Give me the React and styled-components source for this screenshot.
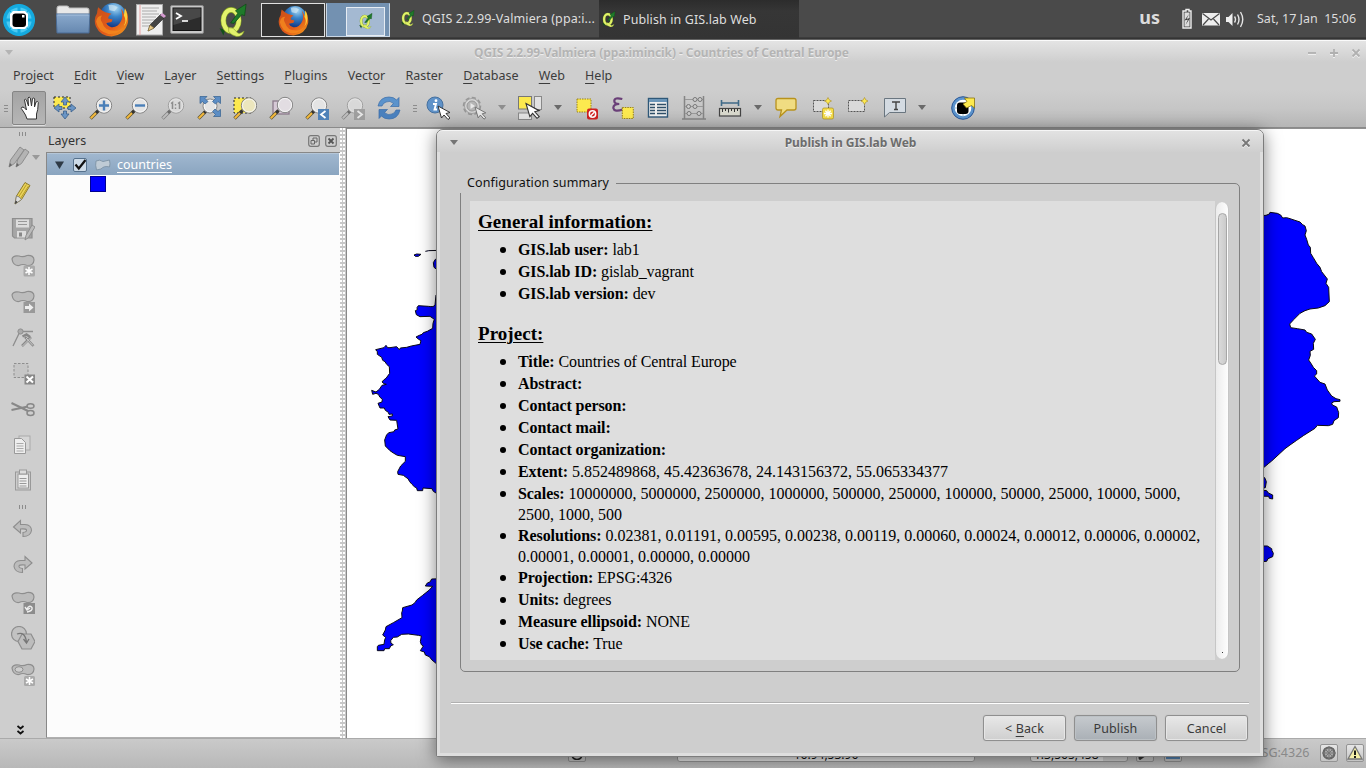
import React from "react";
import styled, { createGlobalStyle } from "styled-components";

const Global = createGlobalStyle`
  * { box-sizing: border-box; }
  html, body { margin: 0; padding: 0; overflow: hidden; }
  body { font-family: "Noto Sans", "Open Sans", sans-serif; font-size: 12.5px; color: #3c3c3c; }
  svg { display: block; flex: none; }
`;

const Desktop = styled.div`
  position: relative;
  width: 1366px;
  height: 768px;
  overflow: hidden;
  display: flex;
  flex-direction: column;
  background: #cecece;
`;

/* ---------- top panel ---------- */
const Panel = styled.header`
  height: 40px;
  flex: none;
  display: flex;
  align-items: flex-start;
  background: linear-gradient(#4a4a4a 0, #4a4a4a 37px, #2e2e2e 38px, #3a3a3a 39px, #8a8a8a 40px);
  color: #dcdcdc;
`;
const Launcher = styled.div`
  width: ${(p) => p.$w}px;
  height: 39px;
  display: flex;
  align-items: center;
  padding-left: ${(p) => p.$l || 0}px;
`;
const Workspace = styled.div`
  width: 64px;
  height: 34px;
  margin: 3px 1px 0 0;
  border: 1px solid ${(p) => (p.$active ? "#c9d6e4" : "#e0e0e0")};
  border-top-color: ${(p) => (p.$active ? "#7391b1" : "#e0e0e0")};
  background: ${(p) => (p.$active ? "#7391b1" : "#333")};
  display: flex;
  align-items: center;
  justify-content: ${(p) => (p.$active ? "flex-end" : "center")};
  padding-right: ${(p) => (p.$active ? 4 : 0)}px;
`;
const MiniWindow = styled.div`
  width: 39px;
  height: 29px;
  margin-top: 2px;
  border: 1px solid #e6ecf3;
  background: #a4b9d2;
  display: flex;
  align-items: center;
  justify-content: center;
`;
const Task = styled.div`
  width: ${(p) => p.$w}px;
  height: 38px;
  padding: 0 0 ${(p) => (p.$active ? 0 : 2)}px ${(p) => p.$l}px;
  display: flex;
  align-items: center;
  gap: 7px;
  white-space: nowrap;
  color: #dedede;
  background: ${(p) => (p.$active ? "linear-gradient(#2c2c2c, #363636 30%, #343434)" : "transparent")};
  font-size: 12.5px;
  letter-spacing: 0.1px;
`;
const Tray = styled.div`
  margin-left: auto;
  height: 37px;
  display: flex;
  align-items: center;
  padding-right: 9px;
`;
const Keyboard = styled.span`
  font-weight: bold;
  font-size: 18px;
  margin-right: 20px;
  padding-bottom: 3px;
`;
const Clock = styled.span`
  font-size: 12.5px;
  margin-left: 13px;
  padding-bottom: 1px;
  white-space: pre;
  width: 100px;
`;

/* ---------- application window ---------- */
const TitleBar = styled.div`
  height: 22px;
  flex: none;
  border-top: 1px solid #fbfbfb;
  background: linear-gradient(#e4e4e4, #cecece);
  display: flex;
  align-items: center;
  justify-content: space-between;
  padding: 2px 5px 0;
`;
const AppTitle = styled.span`
  font-weight: bold;
  font-size: 12px;
  color: #b4b4b4;
  text-shadow: 0 1px 0 #eee;
  white-space: nowrap;
  margin-left: 3px;
  letter-spacing: -0.08px;
`;
const MenuBar = styled.nav`
  height: 28px;
  flex: none;
  display: flex;
  align-items: center;
  gap: 20.2px;
  padding: 0 0 2px 13px;
  font-size: 12.5px;
`;
const MenuItem = styled.span`
  u { text-underline-offset: 3px; text-decoration-thickness: 1px; }
`;
const ToolBar = styled.div`
  height: 38px;
  flex: none;
  display: flex;
  align-items: center;
  padding-bottom: 2px;
  background: linear-gradient(#cecece, #c6c6c6 50%, #b6b6b6);
  border-bottom: 1px solid #8a8a8a;
`;
const Slot = styled.div`
  width: ${(p) => p.$w || 36}px;
  height: 35px;
  margin-left: ${(p) => p.$ml || 0}px;
  display: flex;
  align-items: center;
  justify-content: center;
  opacity: ${(p) => (p.$off ? 0.6 : 1)};
  filter: ${(p) => (p.$off ? "grayscale(1)" : "none")};
`;
const PressedSlot = styled(Slot)`
  height: 34px;
  border: 1px solid #868686;
  border-radius: 2px;
  background: linear-gradient(#a4a4a4, #b6b6b6);
  box-shadow: 0 1px 0 #e0e0e0;
`;
const HGrip = styled.div`
  width: 4px;
  height: 8px;
  margin: 2px ${(p) => p.$r}px 0 ${(p) => p.$l}px;
  background: repeating-linear-gradient(#8c8c8c 0 1px, transparent 1px 3px);
`;
const VGrip = styled.div`
  width: 7px;
  height: 4px;
  flex: none;
  margin: ${(p) => p.$t}px 0 ${(p) => p.$b}px 19px;
  background: repeating-linear-gradient(90deg, #8c8c8c 0 1px, transparent 1px 3px);
`;
const Triangle = styled.i`
  border: 4px solid transparent;
  border-top: 5px solid ${(p) => p.$c || "#6a6a6a"};
  border-bottom: 0;
`;

const Workbench = styled.div`
  height: 610px;
  flex: none;
  display: flex;
`;
const SideBar = styled.aside`
  width: 46px;
  display: flex;
  flex-direction: column;
  background: #cecece;
`;
const SideSlot = styled.div`
  width: 46px;
  height: 36px;
  flex: none;
  display: flex;
  align-items: center;
  justify-content: center;
  padding-left: ${(p) => p.$l || 0}px;
`;
const MoreTools = styled.div`
  margin: 33px 0 0 17px;
`;
const Dock = styled.section`
  width: 294px;
  display: flex;
  flex-direction: column;
`;
const DockTitle = styled.div`
  height: 24px;
  flex: none;
  display: flex;
  align-items: center;
  gap: 5px;
  padding: 1px 3px 0 2px;
  color: #333;
`;
const DockName = styled.span`
  flex: 1;
`;
const Tree = styled.div`
  flex: 1;
  border-left: 1px solid #888;
  border-top: 1px solid #888;
  border-bottom: 1px solid #b0b0b0;
  background: #fcfcfc;
`;
const TreeRow = styled.div`
  height: 22px;
  width: 292px;
  border-top: 1px solid #b4c6d8;
  background: linear-gradient(#a0b7cf, #8aa5c0);
  color: #fff;
  display: flex;
  align-items: center;
  padding-left: 8px;
`;
const CheckBox = styled.div`
  width: 14px;
  height: 14px;
  margin: 0 8px 0 9px;
  border: 1px solid #56718c;
  border-radius: 2px;
  background: #cddbe8;
`;
const LayerName = styled.span`
  margin-left: 6px;
  text-decoration: underline;
  text-underline-offset: 3px;
`;
const Symbol = styled.div`
  width: 16px;
  height: 16px;
  margin: 1px 0 0 43px;
  background: #00f;
  border: 1px solid #000090;
`;
const Splitter = styled.div`
  width: 7px;
  border-right: 1px solid #888;
  background: radial-gradient(circle at 1px 1px, #fff 0.8px, transparent 1px) 0 0 / 3px 4px, #c8c8c8;
`;
const Canvas = styled.div`
  width: 1019px;
  background: #fff;
  box-shadow: inset 0 1px 0 #909090;
`;
const StatusBar = styled.footer`
  flex: 1;
  display: flex;
  align-items: flex-start;
  padding-top: 4px;
  border-top: 1px solid #aaa;
  background: linear-gradient(#cacaca, #b8b8b8);
  font-size: 12px;
  white-space: nowrap;
`;
const Field = styled.div`
  width: ${(p) => p.$w}px;
  height: 19px;
  margin-left: ${(p) => p.$ml}px;
  padding-top: 2px;
  padding-left: ${(p) => p.$pl || 0}px;
  line-height: 17px;
  border: 1px solid #999;
  border-radius: 3px;
  text-align: ${(p) => (p.$pl ? "left" : "center")};
  background: ${(p) => (p.$pl ? "linear-gradient(90deg,#eee 72px,#d6d6d6 72px)" : "#ececec")};
  color: #111;
`;
const StatusButton = styled.div`
  width: 18px;
  height: 18px;
  margin-top: 1px;
  margin-left: ${(p) => p.$ml}px;
  border: 1px solid #949494;
  border-radius: 2px;
  background: linear-gradient(#e6e6e6, #c4c4c4);
  display: flex;
  align-items: center;
  justify-content: center;
`;
const Crs = styled.span`
  width: 60px;
  margin-left: 65px;
  padding-top: 1px;
  text-align: right;
  color: #8a8a8a;
  font-size: 12.5px;
`;

/* ---------- dialog ---------- */
const Dialog = styled.section`
  position: absolute;
  left: 436px;
  top: 129px;
  width: 828px;
  height: 628px;
  border: 1px solid #7c7c7c;
  border-radius: 7px 7px 2px 2px;
  background: #cecece;
  box-shadow: 0 3px 17px rgba(0, 0, 0, 0.5);
  display: flex;
  flex-direction: column;
`;
const DialogTitle = styled.div`
  height: 22px;
  flex: none;
  padding: 2px 12px 0 13px;
  display: flex;
  align-items: center;
  justify-content: space-between;
  border-top: 1px solid #f6f6f6;
  border-radius: 6px 6px 0 0;
  background: linear-gradient(#e2e2e2, #cfcfcf);
`;
const DialogCaption = styled.span`
  font-size: 12px;
  font-weight: bold;
  color: #6c6c6c;
  text-shadow: 0 1px 0 #eee;
  letter-spacing: -0.03px;
  margin-left: 2px;
`;
const DialogBody = styled.div`
  flex: 1;
  display: flex;
  flex-direction: column;
  border: 3px solid #dedede;
  border-top: 0;
  padding: 31px 11px 0 11px;
`;
const Group = styled.div`
  position: relative;
  width: 780px;
  height: 489px;
  margin-left: 9px;
  border: 1px solid #808080;
  border-radius: 5px;
  padding: 17px 9px 0 9px;
  display: flex;
`;
const Legend = styled.span`
  position: absolute;
  left: -1px;
  top: -11px;
  height: 20px;
  width: 156px;
  padding-left: 7px;
  line-height: 20px;
  background: #cecece;
  color: #111;
  font-size: 12.5px;
  letter-spacing: 0.1px;
  white-space: nowrap;
`;
const Report = styled.article`
  width: 745px;
  height: 459px;
  padding: 9px 0 0 8px;
  background: #dedede;
  color: #000;
  font-family: "Liberation Serif", serif;
  font-size: 16px;
  white-space: nowrap;
  overflow: hidden;
`;
const Heading = styled.h3`
  margin: 0 0 5px;
  font-size: 19px;
  line-height: 24px;
  letter-spacing: 0.04px;
  text-decoration: underline;
  text-underline-offset: 2px;
  text-decoration-thickness: 1px;
`;
const List = styled.ul`
  margin: 0 0 17px;
  padding: 0 0 0 40px;
  list-style: none;
`;
const Item = styled.li`
  position: relative;
  min-height: 22px;
  line-height: 21px;
  letter-spacing: ${(p) => (p.$numeric ? 0 : -0.1)}px;
  b { letter-spacing: -0.08px; }
  &::before {
    content: "";
    position: absolute;
    left: -18px;
    top: 8px;
    width: 6px;
    height: 6px;
    border-radius: 3px;
    background: #000;
  }
`;
const ScrollTrack = styled.div`
  width: 14px;
  height: 457px;
  margin: 1px 0 0 0;
  padding: 11px 2px;
  border-radius: 7px;
  border: 1px solid #c6c6c6;
  border-width: 0 1px;
  background: linear-gradient(90deg, #ececec, #fdfdfd);
`;
const Thumb = styled.div`
  height: 152px;
  width: 9px;
  border: 1px solid #a6a6a6;
  border-radius: 5px;
  background: linear-gradient(90deg, #dadada, #cbcbcb);
`;
const ScrollMark = styled.div`
  width: 1px;
  height: 1px;
  margin: 287px 0 0 4px;
  background: #333;
`;
const Rule = styled.hr`
  width: 100%;
  height: 2px;
  margin: 30px 0 0;
  border: 0;
  border-top: 1px solid #b0b0b0;
  border-bottom: 1px solid #fff;
`;
const Buttons = styled.div`
  display: flex;
  justify-content: flex-end;
  gap: 8px;
  padding: 11px 1px 0 0;
`;
const Button = styled.button`
  width: 83px;
  height: 26px;
  border: 1px solid #8f8f8f;
  border-radius: 3px;
  padding: 0;
  font: 12.5px "Noto Sans", sans-serif;
  letter-spacing: 0.1px;
  color: #3a3a3a;
  background: ${(p) => (p.$primary ? "linear-gradient(#c6cace, #aab0b6)" : "linear-gradient(#e8e8e8, #cfcfcf)")};
  box-shadow: inset 0 0 0 1px ${(p) => (p.$primary ? "#bcc1c5" : "#e6e6e6")}, 0 0 1px #aaa;
  u { text-underline-offset: 3px; }
`;

/* ---------- drawings ---------- */
const Svg = ({ s = 24, w, h, vb, children }) => (
  <svg width={w || s} height={h || s} viewBox={vb || "0 0 24 24"} fill="none">{children}</svg>
);

const Firefox = ({ s }) => (
  <Svg s={s} vb="0 0 34 34">
    <defs>
      <radialGradient id="ffg" cx=".6" cy=".2" r=".7"><stop offset="0" stopColor="#a8d8f2" /><stop offset=".45" stopColor="#3a84c8" /><stop offset="1" stopColor="#143a86" /></radialGradient>
      <linearGradient id="ffo" x1="0" y1="0" x2="1" y2="1"><stop offset="0" stopColor="#c8501a" /><stop offset=".6" stopColor="#e25a1a" /><stop offset="1" stopColor="#f6a81c" /></linearGradient>
    </defs>
    <circle cx="18.500" cy="14" r="13" fill="url(#ffg)" />
    <path d="M14 3 Q19 1.500 23 5 L20 9 L15 8 Z" fill="#cfe6f2" opacity=".7" />
    <path d="M4 5 Q3 9 3 11 Q-1 17 2 24 Q6 33 17 33.500 Q30 32 33 20 Q34 12 30 6 Q31 12 29.500 13 Q28 8 26 6 Q29 14 26 19 Q23 25 17 24.500 Q13 23.500 12 20.500 L17 19.500 L18 17 L14 16 Q13 14 17 11.500 L11 10 Q7 8 4 5 Z" fill="url(#ffo)" />
    <path d="M2 19 Q4 29 14 31 Q25 32 30 22 Q27 28 20 28 Q10 28 8 20 Q5 16 8 13 Q3 13 2 19 Z" fill="#f58a1e" opacity=".8" />
    <path d="M29 13 Q32 18 29 23 Q31 22 32 17 Q33 11 30 6 Z" fill="#fbd13a" />
  </Svg>
);
const QIcon = ({ w, h }) => (
  <Svg w={w} h={h} vb="0 0 30 34">
    <path d="M0.500 25.500 L6.500 27 L4.500 33 L3 30 Z" fill="#14501a" />
    <ellipse cx="12.500" cy="17.500" rx="8" ry="11" stroke="#7d9a22" strokeWidth="5.800" />
    <ellipse cx="12.500" cy="17.500" rx="8" ry="11" stroke="#e2f26c" strokeWidth="4.600" />
    <path d="M10 25 Q15 24 18 29 Q20 33 26 28.500 Q24 35 18 34 Q13 33 10 29 Z" fill="#e2f26c" stroke="#7d9a22" strokeWidth=".6" />
    <path d="M12 20 L19.500 10 L17 7.500 L28 0.500 L26.500 12.500 L23.500 11.500 L15.500 20.500 Z" fill="#1f7a2a" stroke="#0c4714" strokeWidth=".7" />
  </Svg>
);
const GislabLogo = () => (
  <Svg s={32} vb="0 0 32 32">
    <circle cx="16" cy="16" r="16" fill="#14aadf" />
    <circle cx="16" cy="16" r="12.6" fill="#4ccaf2" />
    <path d="M16 0 V32 M0 16 H32" stroke="#14aadf" strokeWidth="3" />
    <path d="M5 5 L27 27 M27 5 L5 27" stroke="#16a6d8" strokeWidth="1" />
    <path d="M10 7 H22 L25 10 V22 L22 25 H10 L7 22 V10 Z" fill="#fff" />
    <rect x="9.500" y="9.500" width="13.500" height="13.500" rx="3" fill="#000" />
    <rect x="19" y="11" width="2.500" height="2.500" fill="#fff" />
  </Svg>
);
const FolderIcon = () => (
  <Svg w={34} h={29} vb="0 0 34 29">
    <defs><linearGradient id="fo" x1="0" y1="0" x2="0" y2="1"><stop offset="0" stopColor="#8aa9cc" /><stop offset="1" stopColor="#6688b0" /></linearGradient></defs>
    <path d="M1 3 Q1 1 3 1 H11 Q13 1 13 3 H31 Q33 3 33 5 V12 H1 Z" fill="#e8e8e8" stroke="#bbb" />
    <path d="M0 9 H34 L33 28 H1 Z" fill="url(#fo)" stroke="#4a6b94" />
    <path d="M1.5 10 H32.5" stroke="#a9c2de" />
  </Svg>
);
const NotesIcon = () => (
  <Svg w={30} h={32} vb="0 0 30 32">
    <rect x=".5" y=".5" width="26" height="30.5" fill="#eee" stroke="#aaa" />
    <path d="M6 4 H23 M6 7 H21 M6 10 H23 M6 13 H20 M6 16 H23 M6 19 H17 M6 22 H15" stroke="#aaa" strokeWidth="1" />
    <path d="M4 1 V31" stroke="#e9a3a3" />
    <path d="M12 27 L14 21 L25 10 L29 13 L18 24 Z" fill="#444" stroke="#222" strokeWidth=".6" />
    <path d="M12 27 L14 21 L18 24 Z" fill="#e6c98a" stroke="#8a6d2a" strokeWidth=".5" />
    <path d="M24 11 L26.5 9 L30 12 L28 14 Z" fill="#d49ad0" />
  </Svg>
);
const TerminalIcon = () => (
  <Svg w={34} h={30} vb="0 0 34 30">
    <rect x=".5" y=".5" width="33" height="28" rx="1.5" fill="#c8c8c8" stroke="#8a8a8a" />
    <rect x="3" y="3" width="28" height="22.5" fill="#2c2c2c" stroke="#111" />
    <path d="M3.5 3.5 H30.5 V12 L3.5 20 Z" fill="#484848" />
    <path d="M6 8 L11 11 L6 14" stroke="#fff" strokeWidth="1.8" />
    <path d="M12 16 H18" stroke="#fff" strokeWidth="1.6" />
  </Svg>
);
const TrayIcons = () => (
  <Svg w={64} h={22} vb="0 0 64 22">
    <path d="M4 3 H6 V1.5 H9 V3 H11 V20 H3 V3 Z" stroke="#f0f0f0" strokeWidth="1.4" />
    <path d="M4.5 4.5 H9.5 V18.5 H4.5 Z" fill="#ddd" />
    <path d="M9 6 L4.5 12.5 L8 11.5 L5.5 17 L10 10 L6.5 11 Z" fill="#333" />
    <rect x="22" y="5" width="18" height="12.5" fill="#eee" />
    <path d="M22.5 5.5 L31 12 L39.500 5.5 M23 17 L28.500 11 M39 17 L33.500 11" stroke="#4a4a4a" strokeWidth="1.2" />
    <path d="M46 9 H48.500 L52.500 5 V18 L48.500 14 H46 Z" fill="#eee" />
    <path d="M54.500 8.500 Q56.500 11.500 54.500 14.500 M57.500 6.500 Q60.500 11.500 57.500 16.500 M60.500 4 Q65 11.500 60.500 19" stroke="#e4e4e4" strokeWidth="1.4" />
  </Svg>
);

const Lens = ({ fill = "#e4e4e4", cx = 15, cy = 9.5, r = 7.7 }) => (
  <>
    <path d="M9.500 14.500 L1.500 22.500" stroke="#5a5236" strokeWidth="3.4" />
    <path d="M7.500 16.500 L1.800 22.200" stroke="#f4b93c" strokeWidth="2" />
    <path d="M9.500 14.500 L7 17" stroke="#333" strokeWidth="2.6" />
    <circle cx={cx} cy={cy} r={r} fill={fill} stroke="#858585" strokeWidth="1" />
    <circle cx={cx} cy={cy} r={r - 1.2} stroke="#f6f6f6" strokeWidth="1" />
  </>
);
const Hand = () => (
  <Svg><path transform="translate(2 0)" d="M8 23 Q7 19 4 15 Q1 12 3 11 Q5 10.500 7.500 14 L5.500 4 Q6 2 7.500 4 L9.500 10 L9 2 Q10 0 11.300 2 L12.500 10 L13.500 2.500 Q15 1 15.700 3 L15.500 11 L17 6 Q19 4.500 19.300 6.500 Q19 15 17.500 18 V23 Z" fill="#fff" stroke="#333" strokeWidth="1" /></Svg>
);
const Pan = () => (
  <Svg>
    <rect x="1" y="1" width="16" height="11" fill="#fce94f" stroke="#222" strokeDasharray="2 2" />
    <path d="M12 1 L16 6 H13.500 V9 H10.500 V6 H8 Z M12 23 L16 18 H13.500 V15 H10.500 V18 H8 Z M1 12 L6 8 V10.500 H9 V13.500 H6 V16 Z M23 12 L18 8 V10.500 H15 V13.500 H18 V16 Z" fill="#6a95c6" stroke="#3a5f8a" strokeWidth=".8" />
  </Svg>
);
const ZoomIn = () => <Svg><Lens /><path d="M15 4.500 V14.500 M10 9.500 H20" stroke="#4a7fb8" strokeWidth="2.4" /></Svg>;
const ZoomOut = () => <Svg><Lens /><path d="M10 9.500 H20" stroke="#4a7fb8" strokeWidth="2.4" /></Svg>;
const ZoomOne = () => (
  <Svg><Lens /><path d="M10 7.500 L11.500 6.500 V13 M17 7.500 L18.500 6.500 V13" stroke="#666" strokeWidth="1.5" /><path d="M14.500 8 V9.500 M14.500 11.500 V13" stroke="#666" strokeWidth="1.4" /></Svg>
);
const ZoomFull = () => (
  <Svg><Lens cx={13} cy={10} r={7} />
    <path d="M3 0.500 H10 L8 2.500 L11 5.500 L8 8 L5.500 5.500 L3 7.500 Z M23.500 0.500 V7.500 L21 5.500 L18.500 8 L15.500 5.500 L18.500 2.500 L16.500 0.500 Z M23.500 20.500 H16.500 L18.500 18.500 L15.500 15.500 L18 13 L21 15.500 L23.500 13.500 Z" fill="#5c8dc4" stroke="#34608f" strokeWidth=".7" />
  </Svg>
);
const ZoomSel = () => <Svg><rect x="1" y="2" width="17" height="15" fill="#fce94f" stroke="#222" strokeDasharray="2 2" /><Lens fill="#ece6bd" cx={16} /></Svg>;
const ZoomLayer = () => <Svg><rect x="4" y="5" width="16" height="13" fill="#d6c9d6" stroke="#8b7a8b" strokeWidth="1.3" /><Lens fill="#e2dde2" cx={16} cy={9} /></Svg>;
const ZoomLast = () => <Svg><Lens cx={14} /><rect x="13" y="13" width="11" height="11" fill="#4f82b8" /><path d="M20.500 15 L16 18.500 L20.500 22" stroke="#fff" strokeWidth="1.8" /></Svg>;
const ZoomNext = () => <Svg><Lens cx={14} /><rect x="13" y="13" width="11" height="11" fill="#888" /><path d="M16.500 15 L21 18.500 L16.500 22" stroke="#fff" strokeWidth="1.8" /></Svg>;
const Refresh = () => (
  <Svg>
    <path d="M1 10 Q3 1 12 1 Q17 1 19.500 4 L22 1.500 V10.500 H13.500 L16.500 7.500 Q13 4 9 6 Q6 7 5 10 Z" fill="#5b93cc" stroke="#3a6ba8" strokeWidth=".7" />
    <path d="M23 14 Q21 23 12 23 Q7 23 4.500 20 L2 22.500 V13.500 H10.500 L7.500 16.500 Q11 20 15 18 Q18 17 19 14 Z" fill="#4a80bd" stroke="#3a6ba8" strokeWidth=".7" />
  </Svg>
);
const Cursor = ({ x = 12, y = 10, k = 1 }) => (
  <path transform={`translate(${x} ${y}) scale(${k})`} d="M0 0 L12 6.500 L8 7.500 L12 12 L10 13.500 L6 9 L3.500 12 Z" fill="#fff" stroke="#333" strokeWidth="1" />
);
const Identify = () => (
  <Svg><circle cx="9" cy="9" r="8" fill="#5f92c8" stroke="#45709f" /><circle cx="10" cy="4.700" r="1.400" fill="#fff" /><path d="M7 8 H10 L8.500 13.500 H11" stroke="#fff" strokeWidth="1.900" /><Cursor /></Svg>
);
const Action = () => (
  <Svg><circle cx="10" cy="10" r="8" stroke="#777" strokeWidth="2.500" strokeDasharray="4 2.200" /><circle cx="10" cy="10" r="7.500" fill="#ddd" stroke="#888" /><circle cx="10" cy="10" r="5" fill="#aaa" stroke="#777" /><path d="M8.500 7 L13 10 L8.500 13 Z" fill="#fff" /><Cursor x={13} y={11} k={0.9} /></Svg>
);
const SelectIcon = () => (
  <Svg><rect x=".5" y=".5" width="13" height="12.500" fill="#fce94f" stroke="#777" /><rect x="16.500" y=".5" width="7" height="13" fill="#e2e2e2" stroke="#888" /><rect x=".5" y="17" width="13" height="6.500" fill="#e2e2e2" stroke="#888" /><Cursor x={8} y={7.500} k={1.100} /></Svg>
);
const Deselect = () => (
  <Svg><g transform="translate(1 0)"><rect x="2" y="3" width="14" height="13" fill="#fce94f" stroke="#9a8416" strokeDasharray="1.500 1" /><rect x="12" y="12.500" width="11" height="11" rx="2" fill="#cf2020" /><circle cx="17.500" cy="18" r="3.200" stroke="#fff" strokeWidth="1.500" /><path d="M15.500 20 L19.500 16" stroke="#fff" strokeWidth="1.400" /></g></Svg>
);
const Expression = () => (
  <Svg><g transform="translate(1.300 0)"><path d="M11 3 Q3 1 3 5 Q3 8 8 8 Q2 8 2 12 Q3 16.500 11.500 13.500" stroke="#6a3f78" strokeWidth="2.200" /><rect x="11" y="11.500" width="11" height="11" fill="#fce94f" stroke="#9a8416" strokeDasharray="1.500 1" /></g></Svg>
);
const TableIcon = () => (
  <Svg><rect x="2.500" y="2.500" width="19" height="18.500" fill="#eee" stroke="#2f5878" strokeWidth="1.400" /><path d="M3 4.500 H21" stroke="#6a95b8" strokeWidth="3" /><path d="M4 8.500 H9 M4 11.500 H9 M4 14.500 H9 M4 17.500 H9 M11 8.500 H20 M11 11.500 H20 M11 14.500 H20 M11 17.500 H20" stroke="#2f4f68" strokeWidth="1.300" /></Svg>
);
const Abacus = () => (
  <Svg><path d="M2.500 0 V23 M21.500 0 V23 M0 23 H24" stroke="#858585" strokeWidth="1.500" /><path d="M3 3.500 H21 M3 10.500 H21 M3 17.500 H21" stroke="#999" /><g fill="#ccc" stroke="#777"><circle cx="13" cy="3.500" r="2" /><circle cx="18" cy="3.500" r="2" /><circle cx="6.500" cy="10.500" r="2" /><circle cx="13" cy="10.500" r="2" /><circle cx="7" cy="17.500" r="2" /><circle cx="17" cy="17.500" r="2" /></g></Svg>
);
const Ruler = () => (
  <Svg><path d="M3.500 4 V10 M20.500 4 V10 M3.500 7 H20.500" stroke="#3f6a88" strokeWidth="1.600" /><rect x="1.500" y="12.500" width="21" height="7.500" fill="#d8d8cc" stroke="#444" strokeWidth="1.200" /><path d="M4.500 13 V16 M7.500 13 V15 M10.500 13 V16.500 M13.500 13 V15 M16.500 13 V16 M19.500 13 V15" stroke="#333" /></Svg>
);
const Tip = () => (
  <Svg><path d="M4 2.500 H20 Q22 2.500 22 4.500 V12 Q22 14 20 14 H13 L6 20.500 L7.500 14 H4 Q2 14 2 12 V4.500 Q2 2.500 4 2.500 Z" fill="#f0dc82" stroke="#b8921c" strokeWidth="1.300" /></Svg>
);
const BookmarkNew = () => (
  <Svg><g transform="translate(1 0)"><rect x="2.500" y="4.500" width="15" height="11" fill="#dadada" stroke="#555" strokeDasharray="2 1" /><path d="M17 1.500 L18.200 3.800 L20.500 5 L18.200 6.200 L17 8.500 L15.800 6.200 L13.500 5 L15.800 3.800 Z" fill="#fce94f" stroke="#a98b28" strokeWidth=".6" /><g transform="translate(11.500 12)"><rect width="11" height="11" rx="1.500" fill="#f4dc48" stroke="#a99120" strokeWidth=".7" /><path d="M5.500 1.500 V9.500 M1.500 5.500 H9.500 M2.800 2.800 L8.200 8.200 M8.200 2.800 L2.800 8.200" stroke="#fff" strokeWidth="1.300" /></g></g></Svg>
);
const Bookmark = () => <Svg><rect x="2.500" y="4.500" width="16" height="11" fill="#dadada" stroke="#555" strokeDasharray="2 1" /><path d="M18.500 1.500 L19.700 3.800 L22 5 L19.700 6.200 L18.500 8.500 L17.300 6.200 L15 5 L17.300 3.800 Z" fill="#fce94f" stroke="#a98b28" strokeWidth=".6" /></Svg>;
const TextTool = () => (
  <Svg><g transform="translate(1.500 0)"><path d="M1 2.500 H22 V16.500 H6 L1 21 Z" fill="#d4dbe2" stroke="#6a7680" /><path d="M8.500 6 H16.500 M12.500 6 V13.500 M10.500 13.500 H14.500" stroke="#444" strokeWidth="1.400" /></g></Svg>
);
const GislabTool = () => (
  <Svg><circle cx="12" cy="12" r="11.300" fill="#5b93cc" stroke="#2b5797" /><circle cx="12" cy="12" r="8.300" fill="#fff" /><path d="M4 12 H7 M12 17 V20" stroke="#9bc" /><rect x="6" y="6.500" width="11.500" height="11.500" rx="3" fill="#000" /><path d="M12 8 L16 5.500 L13.500 2 H23.500 V12 L20.500 9.500 L15.500 12 Z" fill="#fce94f" stroke="#8a7410" strokeWidth=".8" /></Svg>
);

const G = "#8e8e8e";
const Blob = () => <path d="M1 6 Q2 2 8 3 Q12 4.500 16 2.500 Q23 2 23 7 Q22.500 13 16 12.500 Q12 10.500 8 12.500 Q2 13 1 6 Z" fill="#bcbcbc" stroke={G} strokeWidth="1.200" />;
const Pencils = () => (
  <Svg><g fill="#b4b4b4" stroke="#888" strokeWidth=".9"><path d="M1 22 L2.500 15 L12 2 L16 5 L6.500 18.500 Z" /><path d="M8 22 L9.500 15 L17 4 L21 7 L13.500 18.500 Z" /></g><path d="M1 22 L2 18 L4 20 Z M8 22 L9 18 L11 20 Z" fill="#666" /></Svg>
);
const Pencil = () => (
  <Svg><path d="M4 23 L5.500 15 L14 1.500 L19 4.500 L10.500 18.500 Z" fill="#e9d35b" stroke="#8d7a2c" /><path d="M7.500 16 L15.500 3.500 M9.500 17.500 L17.500 5" stroke="#b89c28" /><path d="M4 23 L5.500 15 Q8 15 10.500 18.500 Z" fill="#ddd" stroke="#777" strokeWidth=".7" /><path d="M4 23 L4.700 19.500 L6.500 21 Z" fill="#333" /></Svg>
);
const Save = () => (
  <Svg><path d="M1.500 1.500 H21 V21 H3.500 L1.500 19 Z" fill="#a6a6a6" stroke={G} strokeWidth="1.200" /><rect x="5" y="2.500" width="13" height="8" fill="#ddd" /><path d="M7 4.500 H16 M7 7.500 H16" stroke="#999" /><rect x="6" y="14" width="9" height="6.500" fill="#ddd" /><rect x="8" y="15.500" width="3" height="4" fill="#888" /><path d="M14 23 L15 18.500 L21 8 L24 10 L17.500 20.500 Z" fill="#bbb" stroke={G} /></Svg>
);
const BlobNew = () => <Svg><Blob /><rect x="12.500" y="12.500" width="11.500" height="11" rx="1.500" fill="#aaa" /><path d="M18 14 V22 M14.500 16 L21.500 20 M21.500 16 L14.500 20" stroke="#fff" strokeWidth="1.500" /></Svg>;
const BlobMove = () => <Svg><Blob /><rect x="12.500" y="13" width="11.500" height="11" fill="#999" /><path d="M14 17 H18 V14.500 L22.500 18.500 L18 22.500 V20 H14 Z" fill="#eee" /></Svg>;
const NodeTool = () => <Svg><path d="M2 21 L9 6.500 H22" stroke={G} strokeWidth="1.300" /><circle cx="9.500" cy="6.500" r="2.600" fill="#aaa" stroke={G} /><path d="M11 21 L20 12 M14 12 L22.500 21 M11.500 11.500 L15.500 9.500 L19 12" stroke="#888" strokeWidth="2.500" /><path d="M11.500 21 L20 12.500 M15 13 L22 20.500" stroke="#ccc" strokeWidth="1" /></Svg>;
const Delete = () => <Svg><rect x="3" y="2.500" width="14" height="14" fill="#c6c6c6" stroke={G} strokeDasharray="2.500 1.500" /><rect x="13.500" y="13.500" width="10.500" height="10" fill="#888" /><path d="M15.500 15.500 L22 21.500 M22 15.500 L15.500 21.500" stroke="#fff" strokeWidth="2" /></Svg>;
const Cut = () => <Svg><path d="M0.500 6 L17 14 M0.500 13 L17 9.500" stroke="#888" strokeWidth="2" /><ellipse cx="19.500" cy="9" rx="3.500" ry="2.300" stroke="#888" strokeWidth="1.500" /><ellipse cx="19.500" cy="16" rx="3.500" ry="2.500" stroke="#888" strokeWidth="1.500" /></Svg>;
const Copy = () => <Svg><rect x="8" y="3" width="11" height="14" fill="#d6d6d6" stroke="#aaa" /><path d="M3.500 5.500 H10.500 L14.500 9.500 V20.500 H3.500 Z" fill="#eee" stroke="#999" /><path d="M5.500 10.500 H12.500 M5.500 13 H12.500 M5.500 15.500 H12.500 M5.500 18 H12.500" stroke="#aaa" /></Svg>;
const Paste = () => <Svg><rect x="4.500" y="3" width="15" height="18" fill="#ccc" stroke="#999" /><rect x="7" y="5" width="10.500" height="14" fill="#eee" stroke="#999" /><rect x="8.500" y="1" width="7" height="4" fill="#ddd" stroke="#999" /><path d="M8.500 9.500 H15.500 M8.500 12 H15.500 M8.500 14.500 H15.500 M8.500 17 H15.500" stroke="#999" /></Svg>;
const undoPath = "M2.500 9 L9.500 2.500 V6.500 H14 Q20.500 7 20.500 12.500 Q19.500 18.500 12 18.500 V14.500 Q16 14 15.500 12 Q15 10.500 9.500 11 V15 Z";
const Undo = () => <Svg><path d={undoPath} fill="#bcbcbc" stroke={G} strokeWidth="1.100" /></Svg>;
const Redo = () => <Svg><path transform="translate(23.500 0) scale(-1 1)" d={undoPath} fill="#bcbcbc" stroke={G} strokeWidth="1.100" /></Svg>;
const BlobTurn = () => <Svg><Blob /><rect x="12.500" y="13" width="11.500" height="11" fill="#8c8c8c" /><path d="M16 22 Q22 21 21 17.500 Q18 14.500 16 19 M14 17 L16 20 L19 18" stroke="#eee" strokeWidth="1.400" /></Svg>;
const Merge = () => <Svg><circle cx="8" cy="8" r="7.500" fill="#c2c2c2" stroke={G} strokeWidth="1.200" /><path d="M11 8 H20 L24 15.500 L20 23 H11 L7 15.500 Z" fill="#bdbdbd" stroke={G} strokeWidth="1.200" /><path d="M6 8 Q14 5 15.500 16 M12.500 13 L15.500 17 L18 13" stroke="#777" strokeWidth="1.300" /></Svg>;
const Ring = () => <Svg><Blob /><ellipse cx="8" cy="7.500" rx="4" ry="2.800" fill="#cecece" stroke={G} /><rect x="13" y="14" width="11" height="10" rx="1.500" fill="#aaa" /><path d="M18.500 15 V23 M15 17 L22 21 M22 17 L15 21" stroke="#fff" strokeWidth="1.500" /></Svg>;

const EuropeMap = () => (
  <svg width="1019" height="610" viewBox="0 0 1019 610" fill="#00f" stroke="#0a0a14" strokeWidth="3" strokeLinejoin="round">
    <g transform="translate(-7 102) scale(.33333)">
      <path d="M310 195 L288 195 L285 225 Q282 232 265 229 L235 227 L231 233 L232 239 L226 242 L229 254 L240 260 L270 259 L283 268 L279 280 L278 295 L262 304 L250 308 L246 313 L238 316 L228 321 L236 328 L243 332 L240 343 L214 348 L200 352 L181 354 L178 359 L170 350 L150 353 L143 353 L138 346 L132 353 L107 359 L112 365 L112 373 L125 382 L128 391 L135 395 L140 403 L148 410 L149 430 L138 445 L131 450 L126 456 L132 461 L139 463 L126 466 L118 478 L108 486 L95 481 L98 493 L108 490 L115 493 L120 502 L127 507 L126 516 L114 520 L120 534 L133 534 L136 541 L145 547 L147 553 L157 552 L157 558 L144 560 L150 570 L170 571 L172 585 L174 597 L164 600 L162 605 L147 608 L140 614 L134 630 L136 648 L150 662 L160 669 L172 676 L196 680 L196 694 L182 708 L173 725 L174 733 L190 736 L198 742 L204 746 L209 755 L216 763 L223 770 L230 774 L232 782 L248 782 L249 774 L276 776 L280 784 L288 789 L310 790 Z" />
      <path d="M310 1046 L275 1047 L270 1056 L262 1059 L256 1068 L278 1069 L268 1080 L248 1096 L230 1110 L225 1118 L216 1125 L188 1133 L187 1143 L185 1148 L186 1163 L160 1178 L138 1190 L136 1200 L128 1215 L137 1222 L134 1230 L132 1243 L115 1246 L112 1250 L112 1262 L132 1262 L134 1256 L148 1256 L152 1248 L160 1244 L153 1240 L152 1232 L160 1222 L172 1221 L185 1213 L205 1212 L235 1216 L244 1218 L241 1235 L244 1244 L250 1248 L241 1262 L253 1266 L256 1275 L268 1280 L276 1290 L288 1300 L310 1310 Z" />
      <path d="M222 75 L230 72 L243 73 L235 79 L226 79 Z M256 64 L266 62 L300 61 M300 85 L286 88 L280 98 L282 112 L290 118 L310 118" />
    </g>
    <g transform="translate(843 2) scale(.33333)">
      <path d="M190 258 L228 256 L238 252 L240 247 L262 250 L272 255 L278 264 L290 263 L300 266 L318 272 L330 276 L338 284 L345 288 L349 302 L345 315 L350 328 L355 345 L361 352 L362 370 L370 383 L380 400 L390 412 L395 425 L412 447 L408 460 L416 472 L418 515 L405 527 L385 534 L360 537 L345 542 L330 550 L312 568 L299 582 L302 593 L322 596 L345 600 L350 607 L365 612 L376 628 L370 640 L371 658 L360 664 L361 676 L356 690 L364 702 L370 712 L380 722 L380 732 L373 738 L390 757 L405 762 L412 780 L425 798 L438 806 L450 809 L450 814 L432 815 L425 819 L427 825 L440 831 L446 848 L445 863 L432 872 L428 883 L415 887 L382 886 L375 895 L340 917 L320 931 L300 945 L285 956 L270 970 L245 993 L235 1001 L222 1012 L190 1020 Z" />
      <path d="M200 1036 L224 1043 L229 1055 L226 1073 L200 1080 M200 1078 L230 1082 L235 1089 L248 1095 L248 1107 L238 1105 L236 1099 L200 1098" />
      <path d="M200 1248 L232 1248 L245 1256 L246 1262 L250 1270 L248 1280 L234 1286 L230 1294 L200 1296 Z" />
    </g>
  </svg>
);

const WinGlyph = ({ d, c = "#b0b0b0", w = 10 }) => (
  <Svg w={w} h={10} vb="0 0 10 10"><path d={d} stroke="#f2f2f2" strokeWidth="1.800" transform="translate(0 1)" /><path d={d} stroke={c} strokeWidth="1.800" /></Svg>
);
const WindowButtons = styled.div`
  display: flex;
  gap: 12px;
`;

const menus = ["Pr|o|ject", "|E|dit", "|V|iew", "|L|ayer", "|S|ettings", "|P|lugins", "Vect|o|r", "|R|aster", "|D|atabase", "|W|eb", "|H|elp"];
const side1 = [Pencil, Save, BlobNew, BlobMove, NodeTool, Delete, Cut, Copy, Paste];
const side2 = [Undo, Redo, BlobTurn, Merge, Ring];

const general = [["GIS.lab user:", "lab1"], ["GIS.lab ID:", "gislab_vagrant"], ["GIS.lab version:", "dev"]];
const project = [
  ["Title:", "Countries of Central Europe"],
  ["Abstract:", ""],
  ["Contact person:", ""],
  ["Contact mail:", ""],
  ["Contact organization:", ""],
  ["Extent:", "5.852489868, 45.42363678, 24.143156372, 55.065334377"],
  ["Scales:", "10000000, 5000000, 2500000, 1000000, 500000, 250000, 100000, 50000, 25000, 10000, 5000,", "2500, 1000, 500"],
  ["Resolutions:", "0.02381, 0.01191, 0.00595, 0.00238, 0.00119, 0.00060, 0.00024, 0.00012, 0.00006, 0.00002,", "0.00001, 0.00001, 0.00000, 0.00000"],
  ["Projection:", "EPSG:4326"],
  ["Units:", "degrees"],
  ["Measure ellipsoid:", "NONE"],
  ["Use cache:", "True"],
];
const Items = ({ rows }) => (
  <List>
    {rows.map(([k, v, more]) => (
      <Item key={k} $numeric={/^\d/.test(v)}><b>{k}</b> {v}{more && <><br />{more}</>}</Item>
    ))}
  </List>
);

export default function App() {
  return (
    <Desktop>
      <Global />
      <Panel>
        <Launcher $w={56} $l={3}><GislabLogo /></Launcher>
        <Launcher $w={37}><FolderIcon /></Launcher>
        <Launcher $w={43} $l={1}><Firefox s={35} /></Launcher>
        <Launcher $w={34}><NotesIcon /></Launcher>
        <Launcher $w={49}><TerminalIcon /></Launcher>
        <Launcher $w={42}><QIcon w={29} h={34} /></Launcher>
        <Workspace><Firefox s={31} /></Workspace>
        <Workspace $active><MiniWindow><QIcon w={14} h={16} /></MiniWindow></Workspace>
        <Task $w={208} $l={10}><QIcon w={14} h={16} />QGIS 2.2.99-Valmiera (ppa:i...</Task>
        <Task $w={200} $l={3} $active><QIcon w={14} h={16} />Publish in GIS.lab Web</Task>
        <Tray><Keyboard>us</Keyboard><TrayIcons /><Clock>Sat, 17 Jan  15:06</Clock></Tray>
      </Panel>

      <TitleBar>
        <Triangle $c="#b4b4b4" />
        <AppTitle>QGIS 2.2.99-Valmiera (ppa:imincik) - Countries of Central Europe</AppTitle>
        <WindowButtons>
          <WinGlyph d="M1 5 H9" /><WinGlyph d="M1 5 H9 M5 1 V9" /><WinGlyph d="M1.500 1.500 L8.500 8.500 M8.500 1.500 L1.500 8.500" />
        </WindowButtons>
      </TitleBar>
      <MenuBar>
        {menus.map((m) => {
          const [a, b, c] = m.split("|");
          return <MenuItem key={m}>{a}<u>{b}</u>{c}</MenuItem>;
        })}
      </MenuBar>
      <ToolBar>
        <HGrip $l={4} $r={4} />
        <PressedSlot $w={34}><Hand /></PressedSlot>
        <Slot $ml={1}><Pan /></Slot>
        <Slot><ZoomIn /></Slot>
        <Slot><ZoomOut /></Slot>
        <Slot $off><ZoomOne /></Slot>
        <Slot><ZoomFull /></Slot>
        <Slot><ZoomSel /></Slot>
        <Slot><ZoomLayer /></Slot>
        <Slot><ZoomLast /></Slot>
        <Slot $off><ZoomNext /></Slot>
        <Slot><Refresh /></Slot>
        <HGrip $l={6} $r={3} />
        <Slot><Identify /></Slot>
        <Slot $off><Action /></Slot>
        <Slot $w={20}><Triangle $c="#8e8e8e" /></Slot>
        <Slot><SelectIcon /></Slot>
        <Slot $w={20}><Triangle /></Slot>
        <Slot><Deselect /></Slot>
        <Slot><Expression /></Slot>
        <Slot><TableIcon /></Slot>
        <Slot><Abacus /></Slot>
        <Slot><Ruler /></Slot>
        <Slot $w={20}><Triangle /></Slot>
        <Slot><Tip /></Slot>
        <Slot><BookmarkNew /></Slot>
        <Slot><Bookmark /></Slot>
        <Slot><TextTool /></Slot>
        <Slot $w={20}><Triangle /></Slot>
        <Slot $ml={13}><GislabTool /></Slot>
      </ToolBar>

      <Workbench>
        <SideBar>
          <VGrip $t={4} $b={3} />
          <SideSlot $l={2}><Pencils /><Triangle $c="#999" /></SideSlot>
          {side1.map((I, i) => <SideSlot key={i}><I /></SideSlot>)}
          <VGrip $t={6} $b={3} />
          {side2.map((I, i) => <SideSlot key={i}><I /></SideSlot>)}
          <MoreTools>
            <Svg w={8} h={11} vb="0 0 8 11"><path d="M0.500 1 L3.500 3.500 L6.500 1 M0.500 6 L3.500 8.500 L6.500 6" stroke="#111" strokeWidth="1.800" /></Svg>
          </MoreTools>
        </SideBar>
        <Dock>
          <DockTitle>
            <DockName>Layers</DockName>
            <Svg s={12} vb="0 0 12 12"><rect x=".7" y=".7" width="10.600" height="10.600" rx="2" stroke="#777" strokeWidth="1.200" /><path d="M3 5.500 H6.500 V9 H3 Z M5 5 V3 H9 V7 H7" stroke="#666" /></Svg>
            <Svg s={12} vb="0 0 12 12"><rect x=".7" y=".7" width="10.600" height="10.600" rx="2" stroke="#777" strokeWidth="1.200" /><path d="M3.500 3.500 L8.500 8.500 M8.500 3.500 L3.500 8.500" stroke="#555" strokeWidth="1.800" /></Svg>
          </DockTitle>
          <Tree>
            <TreeRow>
              <Svg w={9} h={8} vb="0 0 9 8"><path d="M0 .5 H9 L4.500 8 Z" fill="#2e3a46" /></Svg>
              <CheckBox><Svg s={12} vb="0 0 12 12"><path d="M1.500 5.500 L4.800 9.500 L11.500 1" stroke="#111" strokeWidth="2.200" /></Svg></CheckBox>
              <Svg w={16} h={12} vb="0 0 16 12"><path d="M1 2 Q5 0 8 2.500 L14.500 1 Q15.500 5 14.500 8 Q9 6.500 6 10 L1.500 11 Q0 6 1 2 Z" fill="#bfcbd5" stroke="#8297a9" /></Svg>
              <LayerName>countries</LayerName>
            </TreeRow>
            <Symbol />
          </Tree>
        </Dock>
        <Splitter />
        <Canvas><EuropeMap /></Canvas>
      </Workbench>

      <StatusBar>
        <StatusButton $ml={568}><Svg s={14} vb="0 0 14 14"><circle cx="7" cy="8" r="5.500" stroke="#222" strokeWidth="1.500" /><path d="M7 4 V9 H9" stroke="#222" /></Svg></StatusButton>
        <Field $w={298} $ml={91}>16.94,53.96</Field>
        <Field $w={98} $ml={55} $pl={3}>1:3,565,458</Field>
        <StatusButton $ml={8}><Svg s={14} vb="0 0 14 14"><path d="M1 13 L11 6" stroke="#333" strokeWidth="3" /></Svg></StatusButton>
        <StatusButton $ml={10}><Svg s={14} vb="0 0 14 14"><path d="M0 12 H14" stroke="#5585b5" strokeWidth="2" /></Svg></StatusButton>
        <Crs>EPSG:4326</Crs>
        <StatusButton $ml={13}><Svg s={16} vb="0 0 16 16"><circle cx="8" cy="8" r="5.500" fill="#a8a8a8" stroke="#666" strokeWidth="2.200" /><path d="M8 1 V15 M1 8 H15 M3 3 L13 13 M13 3 L3 13" stroke="#777" /></Svg></StatusButton>
        <StatusButton $ml={8}><Svg s={16} vb="0 0 16 16"><path d="M8 1.500 L15 14 H1 Z" fill="#f6f0a8" stroke="#777" strokeWidth="1.300" /><path d="M8 5.500 V10 M8 11 V13" stroke="#111" strokeWidth="1.900" /></Svg></StatusButton>
      </StatusBar>

      <Dialog>
        <DialogTitle>
          <Triangle $c="#757575" />
          <DialogCaption>Publish in GIS.lab Web</DialogCaption>
          <WinGlyph c="#777" d="M1.500 1.500 L8.500 8.500 M8.500 1.500 L1.500 8.500" />
        </DialogTitle>
        <DialogBody>
          <Group>
            <Legend>Configuration summary</Legend>
            <Report>
              <Heading>General information:</Heading>
              <Items rows={general} />
              <Heading>Project:</Heading>
              <Items rows={project} />
            </Report>
            <ScrollTrack><Thumb /><ScrollMark /></ScrollTrack>
          </Group>
          <Rule />
          <Buttons>
            <Button>&lt; <u>B</u>ack</Button>
            <Button $primary>Publish</Button>
            <Button>Cancel</Button>
          </Buttons>
        </DialogBody>
      </Dialog>
    </Desktop>
  );
}
